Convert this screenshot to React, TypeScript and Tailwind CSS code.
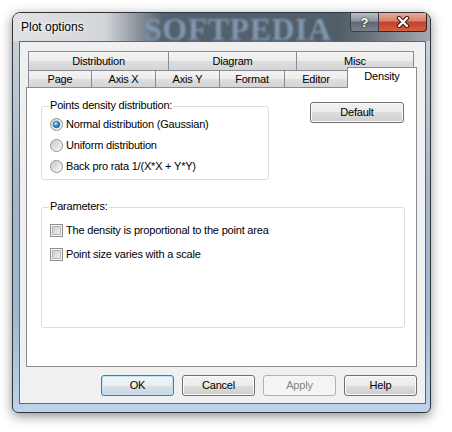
import React from 'react';

function Tab({ label, className = '' }: { label: string; className?: string }) {
  return (
    <div
      className={`flex h-full items-center justify-center border-l border-t border-[#898c95] bg-[linear-gradient(to_bottom,#f4f4f4,#ececec_50%,#dfdfdf_50%,#d4d4d4)] ${className}`}
    >
      {label}
    </div>
  );
}

function Radio({ checked = false }: { checked?: boolean }) {
  return (
    <svg width="13" height="13" viewBox="0 0 13 13" className="shrink-0">
      <defs>
        <linearGradient id="radioRing" x1="0" y1="0" x2="1" y2="1">
          <stop offset="0" stopColor="#d2d2d2" />
          <stop offset="1" stopColor="#fcfcfc" />
        </linearGradient>
        <linearGradient id="radioWell" x1="0" y1="0" x2="1" y2="1">
          <stop offset="0" stopColor="#c9c9c9" />
          <stop offset="1" stopColor="#f6f6f6" />
        </linearGradient>
        <radialGradient id="radioDot" cx="0.38" cy="0.35" r="0.7">
          <stop offset="0" stopColor="#c8ecff" />
          <stop offset="0.45" stopColor="#4b9ad8" />
          <stop offset="1" stopColor="#124c80" />
        </radialGradient>
      </defs>
      <circle cx="6.5" cy="6.5" r="6" fill="url(#radioRing)" stroke="#8e8f8f" />
      <circle cx="6.5" cy="6.5" r="4.2" fill="url(#radioWell)" />
      {checked && <circle cx="6.5" cy="6.5" r="3.3" fill="url(#radioDot)" stroke="#1f5a8c" strokeWidth="0.6" />}
    </svg>
  );
}

function Checkbox() {
  return (
    <div className="flex h-[13px] w-[13px] shrink-0 items-center justify-center border border-[#8e8f8f] bg-[#f5f5f5]">
      <div className="h-[9px] w-[9px] border border-[#b4b8bd] bg-[linear-gradient(135deg,#c6cacf,#f3f3f4)]" />
    </div>
  );
}

function Button({ label, kind = 'normal', className = '' }: { label: string; kind?: 'normal' | 'default' | 'disabled'; className?: string }) {
  const look =
    kind === 'default'
      ? 'border-[#3c7fb1] bg-[linear-gradient(to_bottom,#f1f5f8,#e8eef2_50%,#d9e1e7_50%,#ccd6dd)] shadow-[inset_0_0_0_1px_#bfe4f8]'
      : kind === 'disabled'
        ? 'border-[#adb2b5] bg-[#f4f4f4] text-[#838383]'
        : 'border-[#707070] bg-[linear-gradient(to_bottom,#f2f2f2,#ebebeb_50%,#dddddd_50%,#cfcfcf)] shadow-[inset_0_0_0_1px_#fbfbfb]';
  return (
    <div className={`flex h-[21px] items-center justify-center rounded-[3px] border ${look} ${className}`}>
      {label}
    </div>
  );
}

export default function App() {
  return (
    <div className="h-[432px] w-[452px] bg-white pl-[12px] pt-[12px] font-['Liberation_Sans',Arial,sans-serif] text-[11px] text-black">
      <div className="flex h-[401px] w-[419px] flex-col overflow-hidden rounded-t-[8px] rounded-b-[6px] border border-[#30353b] bg-[linear-gradient(to_bottom,#cfd4d9,#a4b6c8_45%,#9eb8d2_75%,#bdd4eb)] shadow-[0_3px_12px_rgba(0,0,0,0.45)]">
        {/* title bar */}
        <div className="relative flex h-[28px] shrink-0 items-start bg-[linear-gradient(to_right,#dfe1e3,#d3d6d9_22%,#8a939c_30%,#55616d_36%,#515e6a_78%,#646e78_84%,#a3a9af_100%)] pl-[8px] pr-[3px]">
          <span className="pointer-events-none absolute left-[131px] top-[-4px] font-['Liberation_Serif',serif] text-[32px] font-bold leading-[40px] tracking-[0.5px] text-[#7f97b0] blur-[1.1px]">
            SOFTPEDIA
          </span>
          <span className="relative pt-[7px] text-[12px] leading-[14px] [text-shadow:0_0_5px_#fff,0_0_3px_#fff]">Plot options</span>
          <div className="relative ml-auto flex">
            <div className="flex h-[19px] w-[29px] items-center justify-center rounded-bl-[4px] border border-t-0 border-[#3a4048] bg-[linear-gradient(to_bottom,#b7bec5,#8d969f_45%,#5f6872_50%,#77818b)] text-[13px] font-bold leading-none text-white [text-shadow:0_0_2px_#1c2126,0_0_1px_#1c2126]">
              ?
            </div>
            <div className="flex h-[19px] w-[48px] items-center justify-center rounded-br-[4px] border border-l-0 border-t-0 border-[#4a1d14] bg-[linear-gradient(to_bottom,#e9aa9c,#d9806d_45%,#c2402a_50%,#d2613f)]">
              <svg width="14" height="12" viewBox="0 0 14 12">
                <path d="M3 2 L11 10 M11 2 L3 10" stroke="#3d1710" strokeWidth="4.4" strokeLinecap="round" />
                <path d="M3 2 L11 10 M11 2 L3 10" stroke="#ffffff" strokeWidth="2.4" strokeLinecap="round" />
              </svg>
            </div>
          </div>
        </div>

        {/* client area */}
        <div className="mb-[8px] ml-[6px] mr-[4px] flex flex-1 flex-col border border-[#5f656c] bg-[#f0f0f0] tracking-[-0.2px]">
          <div className="ml-[6px] mt-[9px] w-[391px]">
            <div className="flex h-[19px] pl-[2px]">
              <Tab label="Distribution" className="w-[140px]" />
              <Tab label="Diagram" className="w-[128px]" />
              <Tab label="Misc" className="w-[118px] border-r" />
            </div>
            <div className="flex h-[17px] items-end pl-[2px]">
              <Tab label="Page" className="w-[63px]" />
              <Tab label="Axis X" className="w-[64px]" />
              <Tab label="Axis Y" className="w-[64px]" />
              <Tab label="Format" className="w-[65px]" />
              <Tab label="Editor" className="w-[63px]" />
              <div className="relative z-10 mb-[-1px] flex h-[21px] w-[70px] items-center justify-center border-x border-t border-[#898c95] bg-white pb-[3px]">
                Density
              </div>
            </div>

            <div className="h-[280px] border border-[#898c95] bg-white">
              <div className="flex items-start pl-[14px] pr-[12px] pt-[14px]">
                <div className="relative mt-[4px] h-[74px] w-[228px] rounded-[3px] border border-[#d5dfe5]">
                  <span className="absolute left-[7px] top-[-8px] bg-white px-[1px] leading-[13px]">Points density distribution:</span>
                  <div className="flex flex-col pl-[8px] pt-[7px]">
                    <div className="flex h-[21px] items-center gap-[3px]">
                      <Radio checked />
                      <span>Normal distribution (Gaussian)</span>
                    </div>
                    <div className="flex h-[21px] items-center gap-[3px]">
                      <Radio />
                      <span>Uniform distribution</span>
                    </div>
                    <div className="flex h-[21px] items-center gap-[3px]">
                      <Radio />
                      <span>Back pro rata 1/(X*X + Y*Y)</span>
                    </div>
                  </div>
                </div>
                <Button label="Default" className="ml-auto w-[94px]" />
              </div>

              <div className="relative ml-[14px] mt-[27px] h-[121px] w-[364px] rounded-[3px] border border-[#d5dfe5]">
                <span className="absolute left-[7px] top-[-8px] bg-white px-[1px] leading-[13px]">Parameters:</span>
                <div className="flex flex-col gap-[4px] pl-[8px] pt-[12px]">
                  <div className="flex h-[20px] items-center gap-[3px]">
                    <Checkbox />
                    <span>The density is proportional to the point area</span>
                  </div>
                  <div className="flex h-[20px] items-center gap-[3px]">
                    <Checkbox />
                    <span>Point size varies with a scale</span>
                  </div>
                </div>
              </div>
            </div>
          </div>

          <div className="mt-[8px] flex justify-end gap-[8px] pr-[8px]">
            <Button label="OK" kind="default" className="w-[73px]" />
            <Button label="Cancel" className="w-[73px]" />
            <Button label="Apply" kind="disabled" className="w-[73px]" />
            <Button label="Help" className="w-[73px]" />
          </div>
        </div>
      </div>
    </div>
  );
}
